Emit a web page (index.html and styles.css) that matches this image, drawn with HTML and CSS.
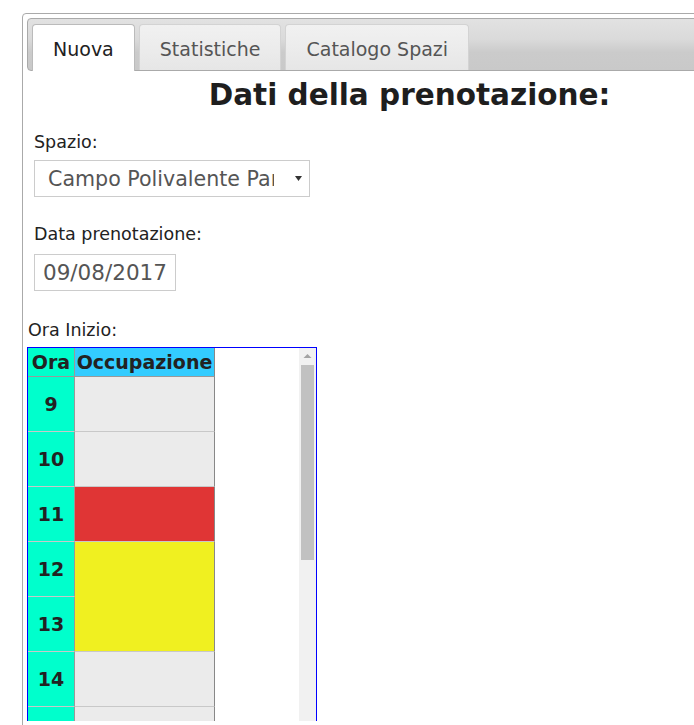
FILE: index.html
```html
<!DOCTYPE html>
<html lang="it">
<head>
  <meta charset="UTF-8">
  <meta name="viewport" content="width=device-width, initial-scale=1.0">
  <title>Prenotazione Spazi</title>
  <link rel="stylesheet" href="styles.css">
</head>
<body>

  <div class="tabs">
    <ul class="tab-nav">
      <li class="tab active">Nuova</li>
      <li class="tab">Statistiche</li>
      <li class="tab">Catalogo Spazi</li>
    </ul>

    <div class="panel">
      <h1>Dati della prenotazione:</h1>

      <div class="field">
        <label>Spazio:</label>
        <div class="select">
          <span class="select-text">Campo Polivalente Parco Nord</span>
          <svg class="select-arrow" width="7" height="5" viewBox="0 0 7 5"><path d="M0 0 H7 L3.5 5 Z" fill="#333"/></svg>
        </div>
      </div>

      <div class="field">
        <label>Data prenotazione:</label>
        <div class="date-input">09/08/2017</div>
      </div>

      <div class="ora-label">Ora Inizio:</div>

      <div class="schedule">
        <div class="schedule-view">
          <table class="schedule-table">
            <thead>
              <tr>
                <th class="col-ora">Ora</th>
                <th class="col-occ">Occupazione</th>
              </tr>
            </thead>
            <tbody>
              <tr><td class="col-ora">9</td><td class="col-occ free"></td></tr>
              <tr><td class="col-ora">10</td><td class="col-occ free"></td></tr>
              <tr><td class="col-ora">11</td><td class="col-occ busy"></td></tr>
              <tr><td class="col-ora">12</td><td class="col-occ pending" rowspan="2"></td></tr>
              <tr><td class="col-ora">13</td></tr>
              <tr><td class="col-ora">14</td><td class="col-occ free"></td></tr>
              <tr><td class="col-ora">15</td><td class="col-occ free"></td></tr>
            </tbody>
          </table>
        </div>
        <div class="scrollbar">
          <svg class="scroll-arrow" width="17" height="17" viewBox="0 0 17 17"><path d="M4.5 10 L8.5 6 L12.5 10 Z" fill="#a3a3a3"/></svg>
          <div class="scroll-thumb"></div>
        </div>
      </div>
    </div>
  </div>

</body>
</html>
```

FILE: styles.css
```css
* {
  margin: 0;
  padding: 0;
  box-sizing: border-box;
}

html, body {
  overflow: hidden;
}

body {
  font-family: "DejaVu Sans", Verdana, sans-serif;
  color: #222;
  background-color: #fff;
}

.tabs {
  width: 775px;
  margin: 13px 0 0 22px;
  padding: 4px 4px 8px 4px;
  border: 1px solid #aaa;
  border-radius: 4px;
}

.tab-nav {
  display: flex;
  align-items: flex-start;
  gap: 4px;
  height: 53px;
  padding: 5px 4px 0 4px;
  list-style: none;
  border: 1px solid #aaa;
  border-radius: 4px;
  background: linear-gradient(#e2e2e2 0%, #dadada 40%, #cbcbcb 65%, #c9c9c9 100%);
}

.tab {
  height: 46px;
  padding: 13px 20px 0 20px;
  font-size: 19px;
  line-height: 22px;
  color: #555;
  border: 1px solid #d3d3d3;
  border-bottom: none;
  border-radius: 4px 4px 0 0;
  background: linear-gradient(#f1f1f1 0%, #ececec 50%, #e6e6e6 100%);
}

.tab.active {
  height: 47px;
  margin-bottom: -1px;
  color: #212121;
  background: #fff;
  border-color: #bbb;
}

.panel h1 {
  margin-top: 7px;
  font-size: 29.5px;
  line-height: 34px;
  font-weight: bold;
  text-align: center;
  color: #1e1e1e;
}

.field {
  margin-left: 7px;
}

.field label {
  display: block;
  font-size: 17.5px;
  line-height: 20px;
  margin-top: 20px;
}

.field + .field label {
  margin-top: 27px;
}

.select {
  display: flex;
  align-items: center;
  width: 276px;
  height: 37px;
  margin-top: 8px;
  padding-left: 13px;
  border: 1px solid #ccc;
  color: #555;
  font-size: 20.6px;
}

.select-text {
  width: 226px;
  overflow: hidden;
  white-space: nowrap;
}

.select-arrow {
  margin-left: auto;
  margin-right: 7px;
}

.date-input {
  width: 142px;
  height: 37px;
  margin-top: 10px;
  padding-left: 8px;
  border: 1px solid #ccc;
  color: #555;
  font-size: 21.5px;
  line-height: 35px;
  white-space: nowrap;
}

.ora-label {
  margin-top: 29px;
  padding-left: 1px;
  font-size: 17.5px;
  line-height: 20px;
}

.schedule {
  display: flex;
  width: 290px;
  height: 374px;
  margin-top: 7px;
  border: 1px solid #0000ff;
  border-bottom: none;
}

.schedule-view {
  flex: 1;
  overflow: hidden;
}

.schedule-table {
  border-collapse: separate;
  border-spacing: 0;
  table-layout: fixed;
  font-size: 19px;
  font-weight: bold;
  color: #222;
}

.schedule-table th,
.schedule-table td {
  padding: 0;
  text-align: center;
  vertical-align: middle;
  border-bottom: 1px solid #c8c8c8;
}

.schedule-table th {
  height: 29px;
  line-height: 26px;
  border-bottom-color: #999;
}

.schedule-table td {
  height: 55px;
}

.col-ora {
  width: 47px;
  background-color: #00ffcc;
  border-right: 1px solid #999;
}

.col-occ {
  width: 140px;
  border-right: 1px solid #888;
}

th.col-occ {
  background-color: #33ccff;
}

.free {
  background-color: #ebebeb;
}

.busy {
  background-color: #e03535;
}

.pending {
  background-color: #f0f020;
}

.scrollbar {
  display: flex;
  flex-direction: column;
  width: 17px;
  background-color: #f1f1f1;
}

.scroll-arrow {
  display: block;
}

.scroll-thumb {
  height: 195px;
  margin: 0 2px;
  background-color: #c1c1c1;
}
```
